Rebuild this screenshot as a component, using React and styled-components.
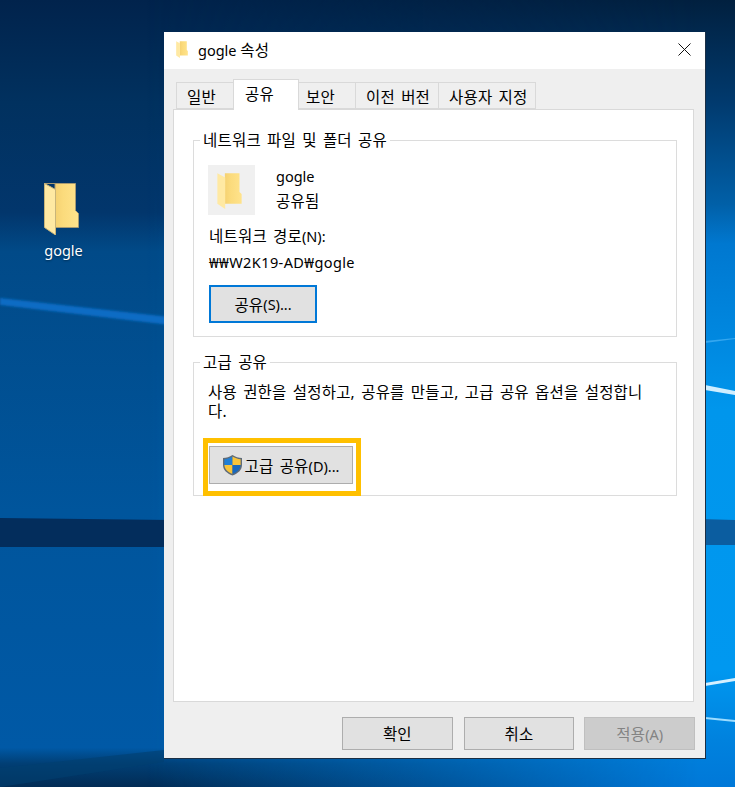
import styled, { createGlobalStyle } from 'styled-components'

const tabs = ['일반', '공유', '보안', '이전 버전', '사용자 지정']
const tabWidths = [58, 66, 58, 84, 98]
const tabPads = [10, 11, 7, 10, 10]

const FolderIcon = ({ width, height, flat }) => (
	<svg width={width} height={height} viewBox="0 0 35 52" preserveAspectRatio="none">
		<defs>
			<linearGradient id={flat ? 'backFlat' : 'back'} x1="0" x2="1" y1="0" y2="0">
				<stop offset="0" stopColor="#eec566" />
				<stop offset="0.55" stopColor="#fbdb7c" />
				<stop offset="1" stopColor="#ffe38c" />
			</linearGradient>
		</defs>
		<path d="M.5 .5H31.5V27.5L34.5 30.5V44.5H11V.5Z" fill={`url(#${flat ? 'backFlat' : 'back'})`} stroke={flat ? 'none' : '#a79a72'} />
		<path d="M.5 .5L11.5 6.5V52L.5 44.5Z" fill="#ffe9a3" stroke={flat ? 'none' : '#c9b57a'} />
	</svg>
)

const ShieldIcon = () => (
	<svg width="21" height="22" viewBox="0 0 21 22">
		<path d="M10.5 1C7.5 3 4.5 4 1 4V11C1 16 5 19.5 10.5 21.5C16 19.5 20 16 20 11V4C16.5 4 13.5 3 10.5 1Z" fill="#5f6b78" />
		<path d="M10.5 2.6V11H2.4V5.2C5.4 5.1 8 4.2 10.5 2.6Z" fill="#1f7fd6" />
		<path d="M10.5 2.6C13 4.2 15.6 5.1 18.6 5.2V11H10.5Z" fill="#f8c43a" />
		<path d="M2.4 11H10.5V20C6 18.2 2.6 15.4 2.4 11Z" fill="#f8c43a" />
		<path d="M10.5 11H18.6C18.4 15.4 15 18.2 10.5 20Z" fill="#1868bd" />
	</svg>
)

const Wallpaper = () => (
	<WallpaperSvg viewBox="0 0 735 787" preserveAspectRatio="none">
		<defs>
			<linearGradient id="leftSide" x1="0" x2="0" y1="0" y2="1">
				<stop offset="0" stopColor="#01234c" />
				<stop offset="0.13" stopColor="#01315f" />
				<stop offset="0.27" stopColor="#02366c" />
				<stop offset="0.32" stopColor="#014a88" />
				<stop offset="0.65" stopColor="#00559c" />
				<stop offset="0.95" stopColor="#0059a6" />
				<stop offset="0.97" stopColor="#013f75" />
				<stop offset="1" stopColor="#022c55" />
			</linearGradient>
			<linearGradient id="rightSide" x1="0" x2="0" y1="0" y2="1">
				<stop offset="0" stopColor="#01203f" />
				<stop offset="0.13" stopColor="#013a6e" />
				<stop offset="0.26" stopColor="#0160a8" />
				<stop offset="0.31" stopColor="#0078d0" />
				<stop offset="0.43" stopColor="#0088e0" />
				<stop offset="0.52" stopColor="#0096ec" />
				<stop offset="0.85" stopColor="#0098f0" />
				<stop offset="0.94" stopColor="#0082de" />
				<stop offset="1" stopColor="#0078d8" />
			</linearGradient>
			<linearGradient id="fade" x1="0" x2="1" y1="0" y2="0">
				<stop offset="0.2" stopColor="#000" />
				<stop offset="0.95" stopColor="#fff" />
			</linearGradient>
			<mask id="fadeMask"><rect width="735" height="787" fill="url(#fade)" /></mask>
			<filter id="soft"><feGaussianBlur stdDeviation="1" /></filter>
		</defs>
		<rect width="735" height="787" fill="url(#leftSide)" />
		<rect width="735" height="787" fill="url(#rightSide)" mask="url(#fadeMask)" />
		<polygon points="0,298 170,317 170,325 0,305" fill="#0a6cc4" filter="url(#soft)" />
		<polygon points="0,518 170,520 170,547 0,547" fill="#032d5c" />
		<polygon points="700,519 735,520 735,545 700,545" fill="#0b5da0" />
		<polygon points="705,385 735,391 735,395 705,390" fill="#cfeeff" />
		<polygon points="705,341 735,338 735,339 705,343" fill="#35a7ef" />
		<polygon points="705,683 735,678 735,681 705,686" fill="#d5f0ff" />
		<polygon points="705,717 735,720 735,722 705,719" fill="#9cdcff" />
		<polygon points="0,768 164,750 164,762 0,787" fill="#01406f" opacity="0.6" />
	</WallpaperSvg>
)

const App = () => {
	return (
		<Desktop>
			<GlobalStyle />
			<Wallpaper />
			<DesktopColumn>
				<DesktopIcon>
					<FolderSlot><FolderIcon width={35} height={52} /></FolderSlot>
					<IconLabel>gogle</IconLabel>
				</DesktopIcon>
			</DesktopColumn>
			<Window>
				<TitleBar>
					<TitleLeft>
						<FolderIcon width={12} height={17} flat />
						<span>gogle <Ko>속성</Ko></span>
					</TitleLeft>
					<svg width="13" height="13" viewBox="0 0 13 13">
						<path d="M.5 .5L12.5 12.5M12.5 .5L.5 12.5" stroke="#111" strokeWidth="1" />
					</svg>
				</TitleBar>
				<Body>
					<TabBar>
						{tabs.map((tab, i) => (
							<Tab key={tab} $active={tab === '공유'} $width={tabWidths[i]} $pad={tabPads[i]}><Ko>{tab}</Ko></Tab>
						))}
					</TabBar>
					<Panel>
						<GroupBox $height={207} $top={15}>
							<legend><Ko>네트워크 파일 및 폴더 공유</Ko></legend>
							<FileRow>
								<FileTile><FolderIcon width={25} height={36} flat /></FileTile>
								<FileInfo>
									<div>gogle</div>
									<div><Ko>공유됨</Ko></div>
								</FileInfo>
							</FileRow>
							<PathBlock>
								<div><Ko>네트워크 경로</Ko>(N):</div>
								<PathText>₩₩W2K19-AD₩gogle</PathText>
							</PathBlock>
							<ShareButton><Ko>공유</Ko>(S)...</ShareButton>
						</GroupBox>
						<GroupBox $height={144} $top={11}>
							<legend><Ko>고급 공유</Ko></legend>
							<Description><Ko>사용 권한을 설정하고, 공유를 만들고, 고급 공유 옵션을 설정합니다.</Ko></Description>
							<Highlight>
								<AdvancedButton><ShieldIcon /><span><Ko>고급 공유</Ko>(D)...</span></AdvancedButton>
							</Highlight>
						</GroupBox>
					</Panel>
					<Footer>
						<DialogButton><Ko>확인</Ko></DialogButton>
						<DialogButton><Ko>취소</Ko></DialogButton>
						<DialogButton $disabled><Ko>적용</Ko>(A)</DialogButton>
					</Footer>
				</Body>
			</Window>
		</Desktop>
	);
}

export default App;

const GlobalStyle = createGlobalStyle`
	html, body {
		margin: 0;
		padding: 0;
		overflow: hidden;
	}
	* {
		box-sizing: border-box;
	}
`;

const Desktop = styled.div`
	position: relative;
	width: 735px;
	height: 787px;
	display: flex;
	align-items: flex-start;
	overflow: hidden;
	font-family: "Noto Sans", "Noto Sans CJK KR", sans-serif;
	font-size: 14.5px;
	color: #000;
`;

/* hangul in the reference runs wider than the latin next to it */
const Ko = styled.span`
	font-size: 15.5px;
	letter-spacing: 0.2px;
	word-spacing: 2px;
`;

const WallpaperSvg = styled.svg`
	position: absolute;
	inset: 0;
	width: 735px;
	height: 787px;
`;

const DesktopColumn = styled.div`
	position: relative;
	width: 164px;
	padding: 183px 0 0 0;
	display: flex;
	justify-content: flex-start;
`;

const DesktopIcon = styled.div`
	width: 127px;
	display: flex;
	flex-direction: column;
	align-items: center;
	gap: 5px;
`;

const FolderSlot = styled.div`
	display: flex;
	padding-right: 4px;
`;

const IconLabel = styled.div`
	color: #fff;
	line-height: 20px;
	text-shadow: 0 1px 2px rgba(0, 0, 0, 0.4);
`;

const Window = styled.div`
	position: relative;
	margin-top: 32px;
	width: 542px;
	height: 727px;
	display: flex;
	flex-direction: column;
	border-right: 1px solid #1b2f45;
	border-bottom: 1px solid #1b2f45;
`;

const TitleBar = styled.div`
	height: 37px;
	background: #fff;
	display: flex;
	align-items: center;
	justify-content: space-between;
	padding: 0 14px 2px 12px;
`;

const TitleLeft = styled.div`
	display: flex;
	align-items: center;
	gap: 10px;
`;

const Body = styled.div`
	flex: 1;
	background: #efefef;
	padding: 10px 10px 0 9px;
	display: flex;
	flex-direction: column;
`;

const TabBar = styled.div`
	display: flex;
	align-items: flex-end;
	padding-left: 3px;
	height: 30px;
`;

const Tab = styled.div`
	width: ${(p) => p.$width}px;
	height: ${(p) => (p.$active ? 31 : 27)}px;
	margin-bottom: ${(p) => (p.$active ? -1 : 0)}px;
	margin-right: -1px;
	background: ${(p) => (p.$active ? '#fff' : '#efefef')};
	border: 1px solid #d9d9d9;
	border-bottom: ${(p) => (p.$active ? 'none' : '1px solid #d9d9d9')};
	position: relative;
	z-index: ${(p) => (p.$active ? 1 : 0)};
	display: flex;
	align-items: center;
	white-space: nowrap;
	padding: ${(p) => (p.$active ? '0 0 3px' : '1px 0 0')} ${(p) => p.$pad}px;
`;

const Panel = styled.div`
	width: 521px;
	height: 593px;
	background: #fff;
	border: 1px solid #d9d9d9;
	padding: 20px 16px 0 19px;
	display: flex;
	flex-direction: column;
	gap: 15px;
`;

const GroupBox = styled.fieldset`
	margin: 0;
	height: ${(p) => p.$height}px;
	border: 1px solid #dcdcdc;
	padding: ${(p) => p.$top}px 15px 0 14px;
	min-width: 0;

	legend {
		margin-left: -8px;
		padding: 0 3px;
		line-height: 20px;
	}
`;

const FileRow = styled.div`
	display: flex;
	align-items: flex-start;
	gap: 21px;
`;

const FileTile = styled.div`
	width: 47px;
	height: 50px;
	background: #f0f0f0;
	display: flex;
	align-items: center;
	justify-content: center;
	padding: 2px 5px 0 0;
`;

const FileInfo = styled.div`
	display: flex;
	flex-direction: column;
	gap: 5px;
	line-height: 20px;
	padding-top: 1px;
`;

const PathBlock = styled.div`
	display: flex;
	flex-direction: column;
	gap: 6px;
	margin: 11px 0 0 1px;
	line-height: 20px;
`;

const PathText = styled.div`
	letter-spacing: 0.4px;
`;

const Button = styled.button`
	font: inherit;
	color: #000;
	padding: 0;
	background: #e1e1e1;
	border: 1px solid #adadad;
	display: flex;
	align-items: center;
	justify-content: center;
`;

const ShareButton = styled(Button)`
	width: 108px;
	height: 38px;
	margin: 13px 0 0 1px;
	border: 2px solid #0078d7;
`;

const Description = styled.div`
	line-height: 19px;
	width: 440px;
	word-break: break-all;
`;

const Highlight = styled.div`
	width: 158px;
	height: 58px;
	margin: 17px 0 0 -5px;
	border: 5px solid #ffc000;
	padding: 3px 3px 7px 1px;
	position: relative;
	z-index: 1;
`;

const AdvancedButton = styled(Button)`
	width: 144px;
	height: 38px;
	gap: 1px;
`;

const Footer = styled.div`
	display: flex;
	gap: 11px;
	padding: 15px 0 0 169px;
`;

const DialogButton = styled(Button)`
	width: 111px;
	height: 33px;
	background: ${(p) => (p.$disabled ? '#cccccc' : '#e1e1e1')};
	border-color: ${(p) => (p.$disabled ? '#bfbfbf' : '#adadad')};
	color: ${(p) => (p.$disabled ? '#838383' : '#000')};
	&:last-child {
		margin-left: -1px;
	}
`;
